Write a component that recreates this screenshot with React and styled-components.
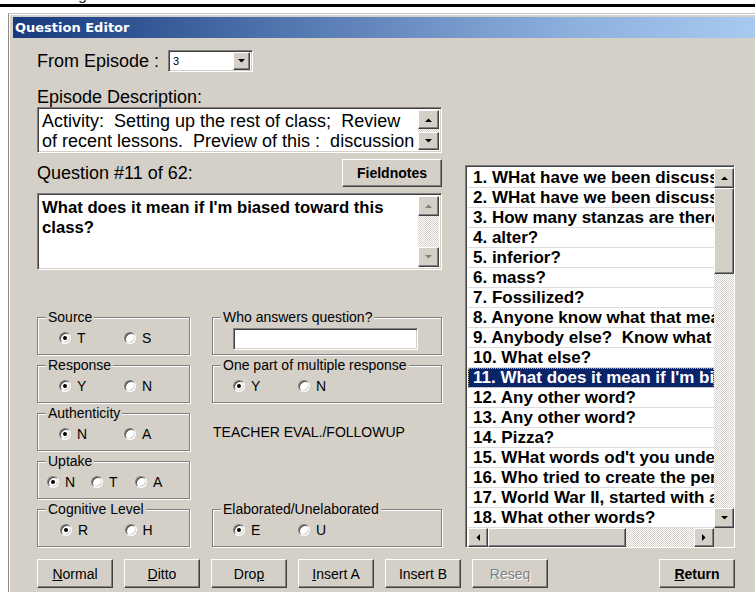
import React from "react"
import styled, { createGlobalStyle, css } from "styled-components"

const FACE = "#d4d0c8"

const GlobalStyle = createGlobalStyle`
  html, body {
    margin: 0;
    background: #fff;
  }
  body {
    font-family: "Liberation Sans", Arial, sans-serif;
    color: #000;
  }
`

const questions = [
  "1. WHat have we been discussing this week?",
  "2. WHat have we been discussing in class?",
  "3. How many stanzas are there?",
  "4. alter?",
  "5. inferior?",
  "6. mass?",
  "7. Fossilized?",
  "8. Anyone know what that means?",
  "9. Anybody else?  Know what that means?",
  "10. What else?",
  "11. What does it mean if I'm biased toward this class?",
  "12. Any other word?",
  "13. Any other word?",
  "14. Pizza?",
  "15. WHat words od't you understand?",
  "16. Who tried to create the perfect race?",
  "17. World War II, started with a",
  "18. What other words?",
]

const raised = css`
  box-sizing: border-box;
  background: ${FACE};
  border: 1px solid;
  border-color: #fff #404040 #404040 #fff;
  box-shadow: inset -1px -1px 0 #808080, inset 1px 1px 0 ${FACE};
`

const sunken = css`
  box-sizing: border-box;
  background: #fff;
  border: 1px solid;
  border-color: #808080 #fff #fff #808080;
  box-shadow: inset 1px 1px 0 #404040, inset -1px -1px 0 ${FACE};
`

const checker = css`
  background: repeating-conic-gradient(#fff 0 25%, ${FACE} 0 50%) 0 0 / 2px 2px;
`

const Page = styled.div`
  width: 755px;
  height: 592px;
  overflow: hidden;
  background: #fff;
`

const PageHead = styled.div`
  height: 13px;
`

const Clip = styled.div`
  height: 4px;
  overflow: hidden;
  padding-left: 78px;
  font-size: 16px;
  line-height: 16px;
  color: #333;

  span {
    display: block;
    margin-top: -13px;
  }
`

const Rule = styled.div`
  height: 3px;
  background: #000;
`

const Window = styled.div`
  margin-left: 8px;
  height: 579px;
  box-sizing: border-box;
  padding: 3px 0 0 4px;
  background: ${FACE};
  border-top: 1px solid #c4c4c4;
  border-left: 1px solid #8a8a8a;
  box-shadow: inset 1px 1px 0 #fff;
`

const TitleBar = styled.div`
  height: 21px;
  display: flex;
  align-items: center;
  padding-left: 2px;
  background: linear-gradient(90deg, #173a7e 0%, #4f73ad 35%, #8cb0dc 75%, #a6caf0 100%);
  color: #fff;
  font-family: "DejaVu Sans", Verdana, sans-serif;
  font-weight: bold;
  font-size: 13px;
`

const Body = styled.div`
  display: grid;
  grid-template-columns: 405px 270px;
  column-gap: 23px;
  padding: 12px 0 0 24px;
`

const LeftColumn = styled.div`
  display: flex;
  flex-direction: column;
`

const EpisodeRow = styled.div`
  display: flex;
  align-items: center;
  height: 22px;
  gap: 9px;
`

const Label = styled.div`
  font-size: 18px;
  line-height: 19px;
  margin-top: ${p => p.$top || 0}px;
`

const Combo = styled.div`
  ${sunken};
  width: 85px;
  height: 22px;
  display: flex;
  align-items: center;
  justify-content: space-between;
  padding: 2px;
  font-size: 11px;

  span {
    padding-left: 2px;
  }
`

const ScrollBtn = styled.div`
  ${raised};
  width: ${p => p.$w || 19}px;
  height: ${p => p.$h || 18}px;
  display: flex;
  align-items: center;
  justify-content: center;
  flex: none;
`

const Track = styled.div`
  ${checker};
  flex: 1;
`

const Thumb = styled.div`
  ${raised};
  flex: none;
  width: ${p => (p.$w ? `${p.$w}px` : "100%")};
  height: ${p => (p.$h ? `${p.$h}px` : "100%")};
`

const TextBox = styled.div`
  ${sunken};
  display: flex;
  height: ${p => p.$h}px;
  padding: 2px;
  margin-top: ${p => p.$top || 0}px;
`

const BoxText = styled.div`
  flex: 1;
  min-width: 0;
  padding: ${p => p.$pad};
  font-size: ${p => p.$size}px;
  font-weight: ${p => (p.$bold ? "bold" : "normal")};
  line-height: ${p => p.$lh}px;
  white-space: ${p => (p.$lines ? "pre" : "normal")};
  overflow: hidden;
`

const VBar = styled.div`
  display: flex;
  flex-direction: column;
  flex: none;
  width: ${p => p.$w || 19}px;
  margin-left: auto;
`

const QuestionHead = styled.div`
  display: flex;
  align-items: center;
  justify-content: space-between;
  height: 28px;
  margin-top: 6px;
`

const Button = styled.button`
  ${raised};
  width: ${p => p.$w || 76}px;
  height: ${p => p.$h || 29}px;
  padding: 0;
  font-family: inherit;
  font-size: 14px;
  font-weight: ${p => (p.$bold ? "bold" : "normal")};
  color: ${p => (p.$off ? "#808080" : "#000")};
  text-shadow: ${p => (p.$off ? "1px 1px 0 #fff" : "none")};
  margin-left: ${p => (p.$push ? "auto" : "0")};
`

const Groups = styled.div`
  display: grid;
  grid-template-columns: 153px 230px;
  grid-auto-rows: 46px;
  column-gap: 22px;
  row-gap: 2px;
  margin-top: 39px;
`

const Group = styled.fieldset`
  margin: 0;
  padding: 0;
  min-width: 0;
  box-sizing: border-box;
  border: 1px solid #808080;
  box-shadow: inset 1px 1px 0 #fff, 1px 1px 0 #fff;
`

const Legend = styled.legend`
  margin-left: 8px;
  padding: 0 2px;
  font-size: 14px;
  line-height: 16px;
  background: ${FACE};
`

const RadioRow = styled.div`
  display: flex;
  align-items: center;
  height: 16px;
  margin-top: 5px;
  padding-left: ${p => p.$pad}px;
`

const Option = styled.label`
  display: flex;
  align-items: center;
  gap: 6px;
  width: ${p => p.$w}px;
  font-size: 14px;
`

const Dot = styled.span`
  position: relative;
  flex: none;
  width: 12px;
  height: 12px;
  box-sizing: border-box;
  border-radius: 50%;
  background: #fff;
  border: 1px solid;
  border-color: #808080 #fff #fff #808080;
  box-shadow: inset 1px 1px 0 #404040, inset -1px -1px 0 ${FACE};

  &::after {
    content: "";
    display: ${p => (p.$on ? "block" : "none")};
    position: absolute;
    left: 3px;
    top: 3px;
    width: 4px;
    height: 4px;
    border-radius: 50%;
    background: #000;
  }
`

const Field = styled.div`
  ${sunken};
  width: 185px;
  height: 22px;
  margin: 3px 0 0 20px;
`

const Note = styled.div`
  font-size: 14px;
  padding-top: 19px;
  padding-left: 1px;
`

const ListBox = styled.div`
  ${sunken};
  margin-top: 115px;
  width: 270px;
  height: 383px;
  padding: 2px;
  display: grid;
  grid-template-columns: 246px 20px;
  grid-template-rows: 360px 19px;
`

const Rows = styled.div`
  overflow: hidden;
`

const Row = styled.div`
  height: 20px;
  box-sizing: border-box;
  border-bottom: 1px solid #dcdcdc;
  padding-left: 5px;
  font-size: 17px;
  font-weight: bold;
  line-height: 19px;
  white-space: pre;
  overflow: hidden;
  background: ${p => (p.$sel ? "#0a246a" : "#fff")};
  color: ${p => (p.$sel ? "#fff" : "#000")};
  outline: ${p => (p.$sel ? "1px dotted #c8b060" : "none")};
  outline-offset: -1px;
`

const HBar = styled.div`
  display: flex;
`

const Corner = styled.div`
  background: ${FACE};
`

const ButtonBar = styled.div`
  grid-column: 1 / -1;
  display: flex;
  gap: 11px;
  margin-top: 11px;
`

const Arrow = ({ dir, muted }) => {
  const shapes = {
    up: "0,4 7,4 3.5,0.5",
    down: "0,0 7,0 3.5,3.5",
    left: "4,0 4,7 0.5,3.5",
    right: "0,0 0,7 3.5,3.5",
  }
  const flat = dir === "up" || dir === "down"
  return (
    <svg width={flat ? 7 : 4} height={flat ? 4 : 7} viewBox={flat ? "0 0 7 4" : "0 0 4 7"}>
      <polygon points={shapes[dir]} fill={muted ? "#808080" : "#000"} />
    </svg>
  )
}

const Radio = ({ label, on, w }) => (
  <Option $w={w}>
    <Dot $on={on} />
    {label}
  </Option>
)

const RadioGroup = ({ title, options, pad = 21, w = 66 }) => (
  <Group>
    <Legend>{title}</Legend>
    <RadioRow $pad={pad}>
      {options.map((o, i) => (
        <Radio key={o} label={o} on={i === 0} w={w} />
      ))}
    </RadioRow>
  </Group>
)

export default function App() {
  return (
    <Page>
      <GlobalStyle />
      <PageHead>
        <Clip>
          <span>g</span>
        </Clip>
        <Rule />
      </PageHead>
      <Window>
        <TitleBar>Question Editor</TitleBar>
        <Body>
          <LeftColumn>
            <EpisodeRow>
              <Label>From Episode :</Label>
              <Combo>
                <span>3</span>
                <ScrollBtn $w={17} $h={18}>
                  <Arrow dir="down" />
                </ScrollBtn>
              </Combo>
            </EpisodeRow>

            <Label $top={16}>Episode Description:</Label>
            <TextBox $h={46}>
              <BoxText $pad="1px 2px 0" $size={18} $lh={20} $lines>
                {"Activity:  Setting up the rest of class;  Review\nof recent lessons.  Preview of this :  discussion"}
              </BoxText>
              <VBar $w={21}>
                <ScrollBtn $w={21} $h={19}>
                  <Arrow dir="up" />
                </ScrollBtn>
                <Track />
                <ScrollBtn $w={21} $h={18}>
                  <Arrow dir="down" />
                </ScrollBtn>
              </VBar>
            </TextBox>

            <QuestionHead>
              <Label>Question #11 of 62:</Label>
              <Button $w={100} $h={28} $bold>
                Fieldnotes
              </Button>
            </QuestionHead>

            <TextBox $h={77} $top={6}>
              <BoxText $pad="2px 2px" $size={16.7} $lh={20} $bold>
                What does it mean if I'm biased toward this class?
              </BoxText>
              <VBar $w={21}>
                <ScrollBtn $w={21} $h={20}>
                  <Arrow dir="up" muted />
                </ScrollBtn>
                <Track />
                <ScrollBtn $w={21} $h={20}>
                  <Arrow dir="down" muted />
                </ScrollBtn>
              </VBar>
            </TextBox>

            <Groups>
              <RadioGroup title="Source" options={["T", "S"]} />
              <Group>
                <Legend>Who answers question?</Legend>
                <Field />
              </Group>
              <RadioGroup title="Response" options={["Y", "N"]} />
              <RadioGroup title="One part of multiple response" options={["Y", "N"]} pad={20} w={65} />
              <RadioGroup title="Authenticity" options={["N", "A"]} />
              <Note>TEACHER EVAL./FOLLOWUP</Note>
              <RadioGroup title="Uptake" options={["N", "T", "A"]} pad={9} w={44} />
              <div />
              <RadioGroup title="Cognitive Level" options={["R", "H"]} pad={22} />
              <RadioGroup title="Elaborated/Unelaborated" options={["E", "U"]} pad={20} w={65} />
            </Groups>
          </LeftColumn>

          <ListBox>
            <Rows>
              {questions.map((q, i) => (
                <Row key={q + i} $sel={i === 10}>
                  {q}
                </Row>
              ))}
            </Rows>
            <VBar $w={20}>
              <ScrollBtn $w={20} $h={20}>
                <Arrow dir="up" />
              </ScrollBtn>
              <Thumb $h={86} />
              <Track />
              <ScrollBtn $w={20} $h={20}>
                <Arrow dir="down" />
              </ScrollBtn>
            </VBar>
            <HBar>
              <ScrollBtn $w={20} $h={19}>
                <Arrow dir="left" />
              </ScrollBtn>
              <Thumb $w={138} />
              <Track />
              <ScrollBtn $w={20} $h={19}>
                <Arrow dir="right" />
              </ScrollBtn>
            </HBar>
            <Corner />
          </ListBox>

          <ButtonBar>
            <Button>
              <u>N</u>ormal
            </Button>
            <Button>
              <u>D</u>itto
            </Button>
            <Button>
              Dro<u>p</u>
            </Button>
            <Button>
              <u>I</u>nsert A
            </Button>
            <Button>Insert B</Button>
            <Button $off>Reseq</Button>
            <Button $push $bold>
              <u>R</u>eturn
            </Button>
          </ButtonBar>
        </Body>
      </Window>
    </Page>
  )
}
